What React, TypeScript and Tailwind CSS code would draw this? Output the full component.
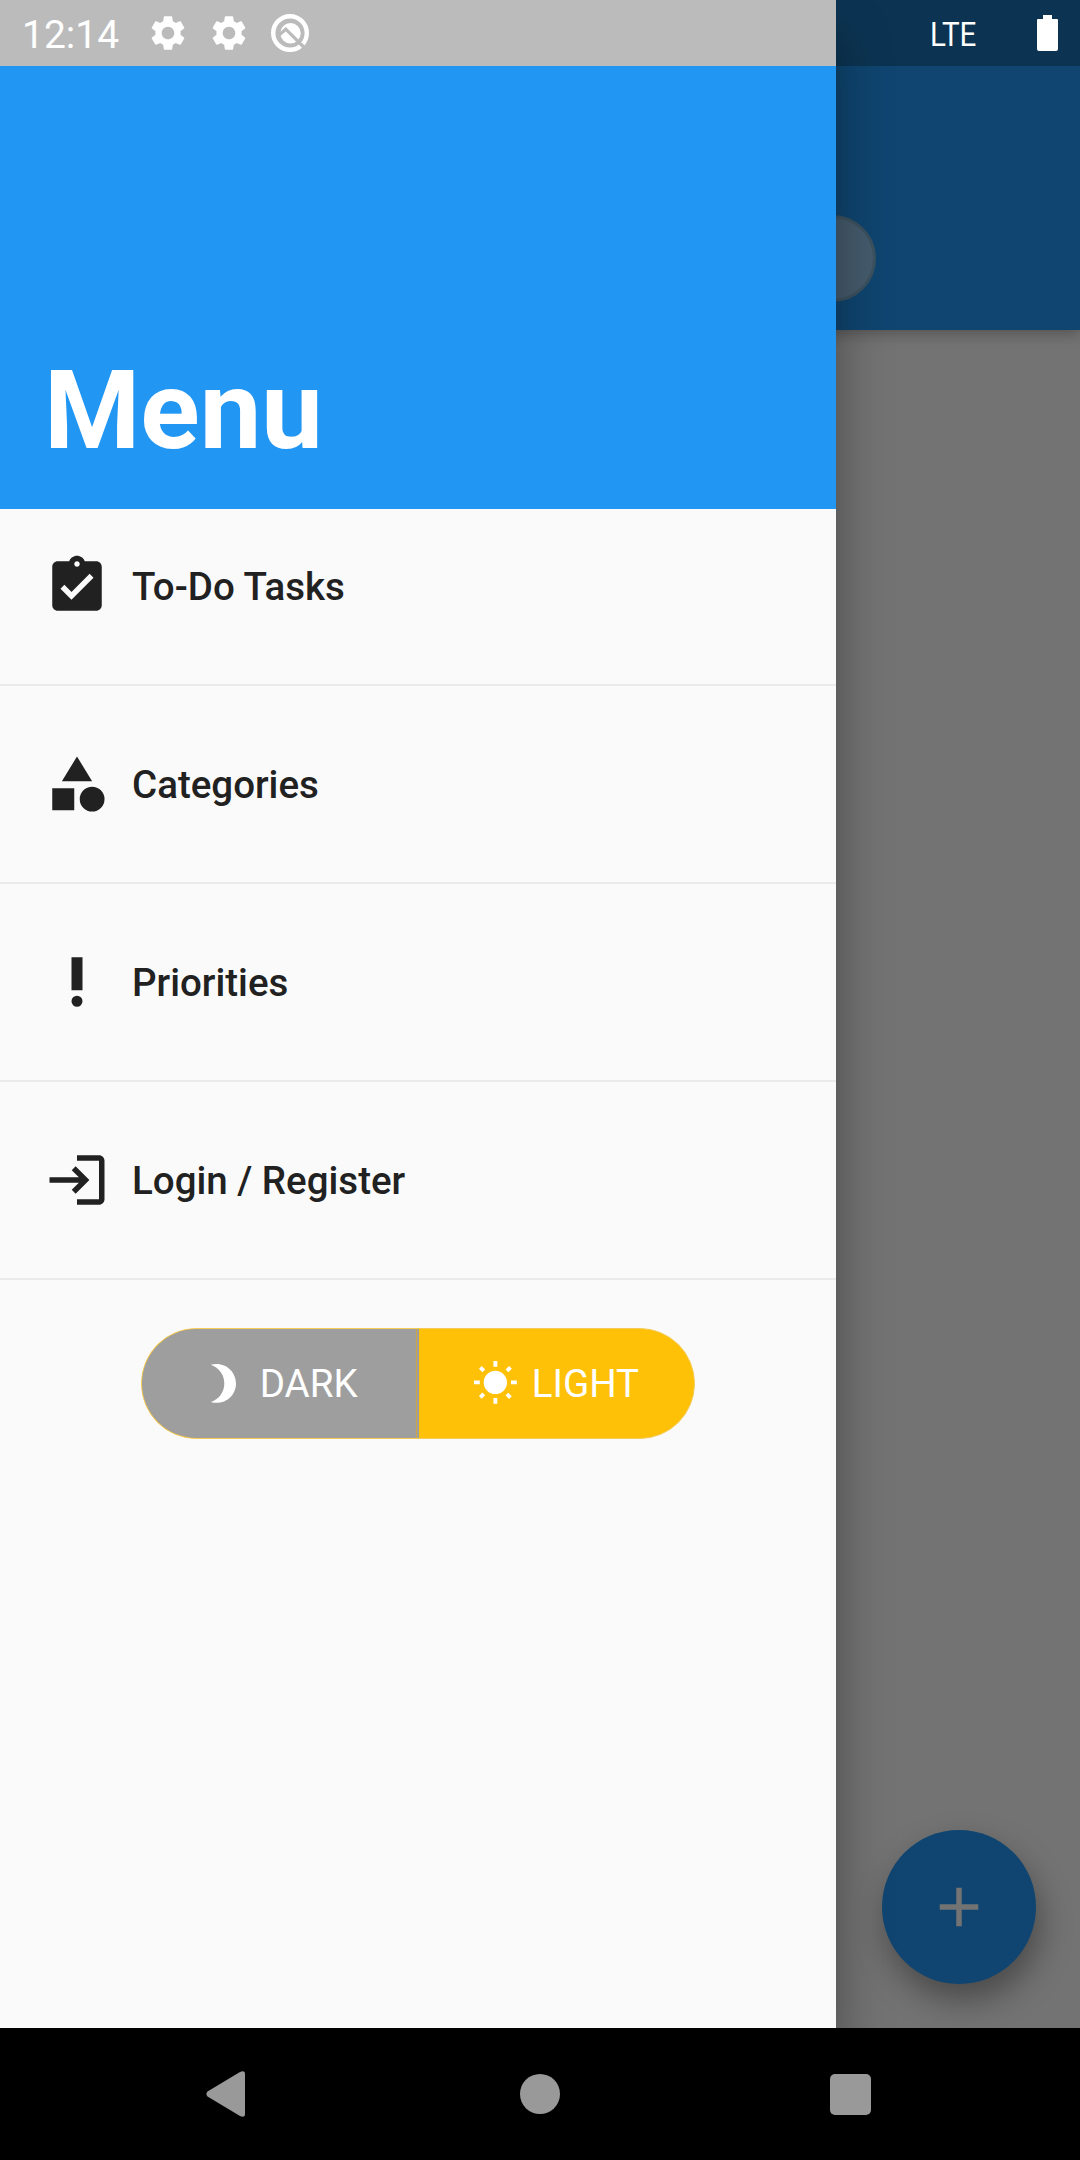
import type { ReactNode } from "react";

function Icon({ d, className }: { d: string; className: string }) {
  return (
    <svg viewBox="0 0 24 24" fill="currentColor" className={className}>
      <path d={d} />
    </svg>
  );
}

const ICONS = {
  settings:
    "M19.14 12.94c.04-.3.06-.61.06-.94 0-.32-.02-.64-.07-.94l2.03-1.58c.18-.14.23-.41.12-.61l-1.92-3.32c-.12-.22-.37-.29-.59-.22l-2.39.96c-.5-.38-1.03-.7-1.62-.94l-.36-2.54c-.04-.24-.24-.41-.48-.41h-3.84c-.24 0-.43.17-.47.41l-.36 2.54c-.59.24-1.13.57-1.62.94l-2.39-.96c-.22-.08-.47 0-.59.22L2.74 8.87c-.12.21-.08.47.12.61l2.03 1.58c-.05.3-.09.63-.09.94s.02.64.07.94l-2.03 1.58c-.18.14-.23.41-.12.61l1.92 3.32c.12.22.37.29.59.22l2.39-.96c.5.38 1.03.7 1.62.94l.36 2.54c.05.24.24.41.48.41h3.84c.24 0 .44-.17.47-.41l.36-2.54c.59-.24 1.13-.56 1.62-.94l2.39.96c.22.08.47 0 .59-.22l1.92-3.32c.12-.22.07-.47-.12-.61l-2.01-1.58zM12 15.6c-1.98 0-3.6-1.62-3.6-3.6s1.62-3.6 3.6-3.6 3.6 1.62 3.6 3.6-1.62 3.6-3.6 3.6z",
  tasks:
    "M19 3h-4.18C14.4 1.84 13.3 1 12 1c-1.3 0-2.4.84-2.82 2H5c-1.1 0-2 .9-2 2v14c0 1.1.9 2 2 2h14c1.1 0 2-.9 2-2V5c0-1.1-.9-2-2-2zm-7 0c.55 0 1 .45 1 1s-.45 1-1 1-1-.45-1-1 .45-1 1-1zm-2 14l-4-4 1.41-1.41L10 14.17l6.59-6.59L18 9l-8 8z",
  category:
    "M12 2l-5.5 9h11zM17.5 13a4.5 4.5 0 100 9 4.5 4.5 0 000-9zM3 13.5h8v8H3z",
  priority: "M10 3h4v12h-4zM12 17a2 2 0 100 4 2 2 0 000-4z",
  login:
    "M10.09 15.59L11.5 17l5-5-5-5-1.41 1.41L12.67 11H2v2h10.67zM20 3h-8v2h8v14h-8v2h8c1.1 0 2-.9 2-2V5c0-1.1-.9-2-2-2z",
  moon: "M9 2c-1.05 0-2.05.16-3 .46 4.06 1.27 7 5.06 7 9.54 0 4.48-2.94 8.27-7 9.54.95.3 1.95.46 3 .46 5.52 0 10-4.48 10-10S14.52 2 9 2z",
  sun: "M6.76 4.84l-1.8-1.79-1.41 1.41 1.79 1.79 1.42-1.41zM4 10.5H1v2h3v-2zm9-9.95h-2V3.5h2V.55zm7.45 3.91l-1.41-1.41-1.79 1.79 1.41 1.41 1.79-1.79zm-3.21 13.7l1.79 1.8 1.41-1.41-1.8-1.79-1.4 1.4zM20 10.5v2h3v-2h-3zm-8-5c-3.31 0-6 2.69-6 6s2.69 6 6 6 6-2.69 6-6-2.69-6-6-6zm-1 16.95h2V19.5h-2v2.95zm-7.45-3.91l1.41 1.41 1.79-1.8-1.41-1.41-1.79 1.8z",
  add: "M19 13h-6v6h-2v-6H5v-2h6V5h2v6h6v2z",
};

function MenuItem({ icon, children }: { icon: string; children: ReactNode }) {
  return (
    <li className="flex h-[198px] items-center border-b-2 border-[#ebebeb] pl-[44px] text-[#212121]">
      <Icon d={icon} className="size-[66px]" />
      <span className="ml-[22px] pt-[3px] text-[38.5px] leading-none font-medium">
        {children}
      </span>
    </li>
  );
}

function StatusBar() {
  return (
    <div className="absolute inset-x-0 top-0 flex h-[66px] items-center text-white">
      <span className="ml-[22px] w-[125px] pt-[4px] text-[39px] leading-none">12:14</span>
      <Icon d={ICONS.settings} className="size-[42px]" />
      <Icon d={ICONS.settings} className="ml-[19px] size-[42px]" />
      <svg viewBox="0 0 40 40" className="ml-[20px] size-[40px]">
        <circle cx="20" cy="20" r="16.8" fill="none" stroke="currentColor" strokeWidth="4.4" />
        <circle cx="20.5" cy="20.3" r="10.2" fill="currentColor" />
        <path d="M8.5 22.6L15.8 16.2L33 33.4" fill="none" stroke="#bbbbbb" strokeWidth="3.2" />
        <path d="M31 31.4L35 35.4" fill="none" stroke="#bbbbbb" strokeWidth="3.2" />
      </svg>
      <span className="ml-auto w-[46px] origin-left scale-x-[0.87] pt-[1px] text-[34px] leading-none">
        LTE
      </span>
      <svg viewBox="0 0 21 36" className="mr-[22px] ml-[61px] h-[36px] w-[21px]" fill="currentColor">
        <path d="M6 0h9v4h5q1 0 1 1v29q0 2-2 2H2q-2 0-2-2V5q0-1 1-1h5z" />
      </svg>
    </div>
  );
}

function ThemeToggle() {
  return (
    <div className="mx-auto mt-[48px] flex h-[111px] w-[554px] overflow-hidden rounded-full border border-[#f5cb58] bg-[#ffc107] text-[38.5px] leading-none text-white">
      <div className="flex w-[275px] items-center border-r border-[#cda645] bg-[#9e9e9e] pl-[57px]">
        <Icon d={ICONS.moon} className="size-[46.75px]" />
        <span className="ml-[14px] pt-[2px]">DARK</span>
      </div>
      <div className="flex flex-1 items-center border-l-2 border-[#9e9e9e] pl-[53px]">
        <Icon d={ICONS.sun} className="size-[46.75px]" />
        <span className="ml-[13px] pt-[2px]">LIGHT</span>
      </div>
    </div>
  );
}

export default function App() {
  return (
    <div className="flex h-[2160px] w-[1080px] flex-col font-['Roboto',sans-serif]">
      <main className="relative h-[2028px] shrink-0 overflow-hidden bg-[#737373]">
        <div className="relative h-[330px] bg-[#0f4570] shadow-[0_3px_14px_rgba(0,0,0,0.3)]">
          <div className="h-[66px] bg-[#0c3452]" />
          <div className="absolute top-[215px] left-[789px] size-[87px] rounded-full border-[3px] border-[#3c525f] bg-[#455b6d]" />
        </div>
        <button className="absolute top-[1830px] left-[882px] flex size-[154px] items-center justify-center rounded-full bg-[#0f4570] text-[#737373] shadow-[4px_16px_32px_rgba(0,0,0,0.36)]">
          <Icon d={ICONS.add} className="size-[66px]" />
        </button>

        <aside className="absolute top-0 left-0 h-full w-[836px] bg-[#fafafa] shadow-[0_36px_50px_rgba(0,0,0,0.36)]">
          <div className="h-[66px] bg-[#bbbbbb]" />
          <header className="flex h-[443px] items-end bg-[#2196f3] pb-[33px] pl-[44px]">
            <h1 className="text-[110px] leading-[1.17] font-bold text-white">Menu</h1>
          </header>
          <ul className="-mt-[21px]">
            <MenuItem icon={ICONS.tasks}>To-Do Tasks</MenuItem>
            <MenuItem icon={ICONS.category}>Categories</MenuItem>
            <MenuItem icon={ICONS.priority}>Priorities</MenuItem>
            <MenuItem icon={ICONS.login}>Login / Register</MenuItem>
          </ul>
          <ThemeToggle />
        </aside>
        <StatusBar />
      </main>

      <nav className="flex h-[132px] items-center bg-black text-[#999999]">
        <svg viewBox="0 0 39 46" className="ml-[206px] h-[46px] w-[39px]" fill="currentColor">
          <path d="M1.5 20.5L34 1Q39 -1 39 3V43Q39 47 34 45L1.5 25.5Q-.7 23 1.5 20.5z" />
        </svg>
        <div className="ml-[275px] size-[40px] rounded-full bg-[#999999]" />
        <div className="ml-[270px] size-[41px] rounded-[5px] bg-[#999999]" />
      </nav>
    </div>
  );
}
